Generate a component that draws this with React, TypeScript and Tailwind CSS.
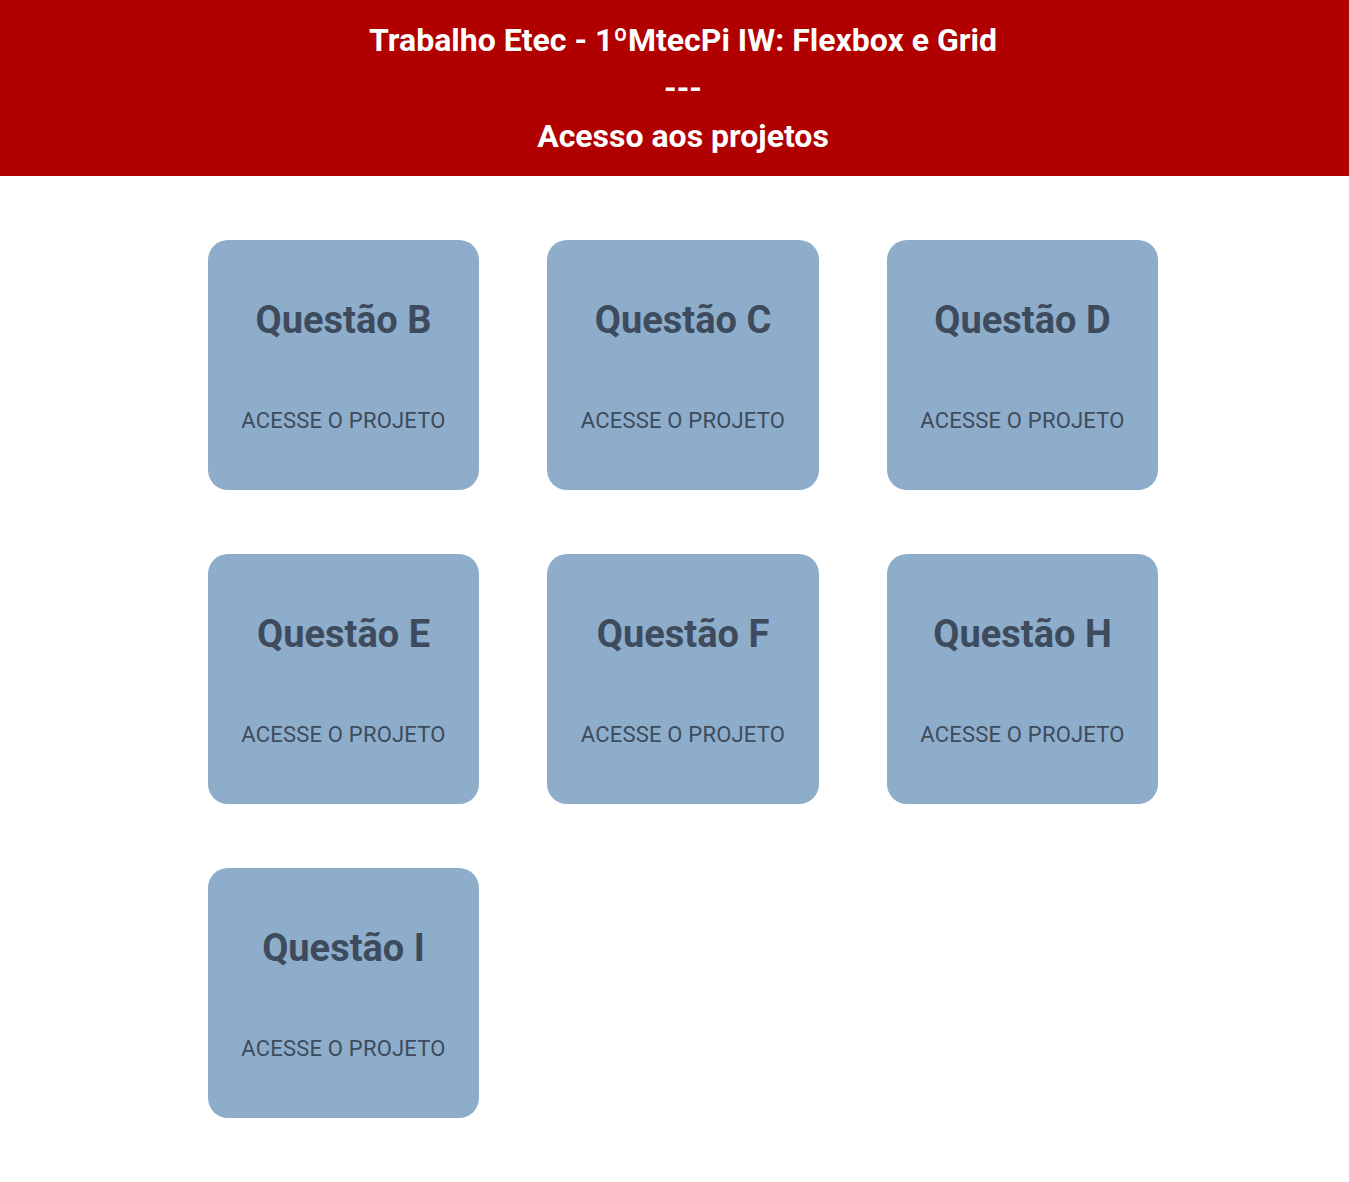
const questoes = ["B", "C", "D", "E", "F", "H", "I"];

export default function App() {
  return (
    <div className="overflow-x-hidden bg-white" style={{ fontFamily: "Roboto, 'Liberation Sans', sans-serif" }}>
      <div className="w-[1366px]">
        <header className="bg-[#b00000] py-4 text-center text-white font-bold text-[32px] leading-[48px]">
          <h1>Trabalho Etec - 1ºMtecPi IW: Flexbox e Grid</h1>
          <p>---</p>
          <p>Acesso aos projetos</p>
        </header>
        <main className="py-16 pl-[208px]">
          <div className="grid grid-cols-[271px_272px_271px] gap-x-[68px] gap-y-16">
            {questoes.map((q) => (
              <a
                key={q}
                href="#"
                className="flex h-[250px] flex-col items-center rounded-[20px] bg-[#8eadcb] pt-[57px] text-[#3d4b5c]"
              >
                <h2 className="text-[38px] font-bold leading-[46px]">Questão {q}</h2>
                <span className="mt-[64px] text-[22px] tracking-[0.2px] leading-[28px] uppercase">Acesse o projeto</span>
              </a>
            ))}
          </div>
        </main>
      </div>
    </div>
  );
}
